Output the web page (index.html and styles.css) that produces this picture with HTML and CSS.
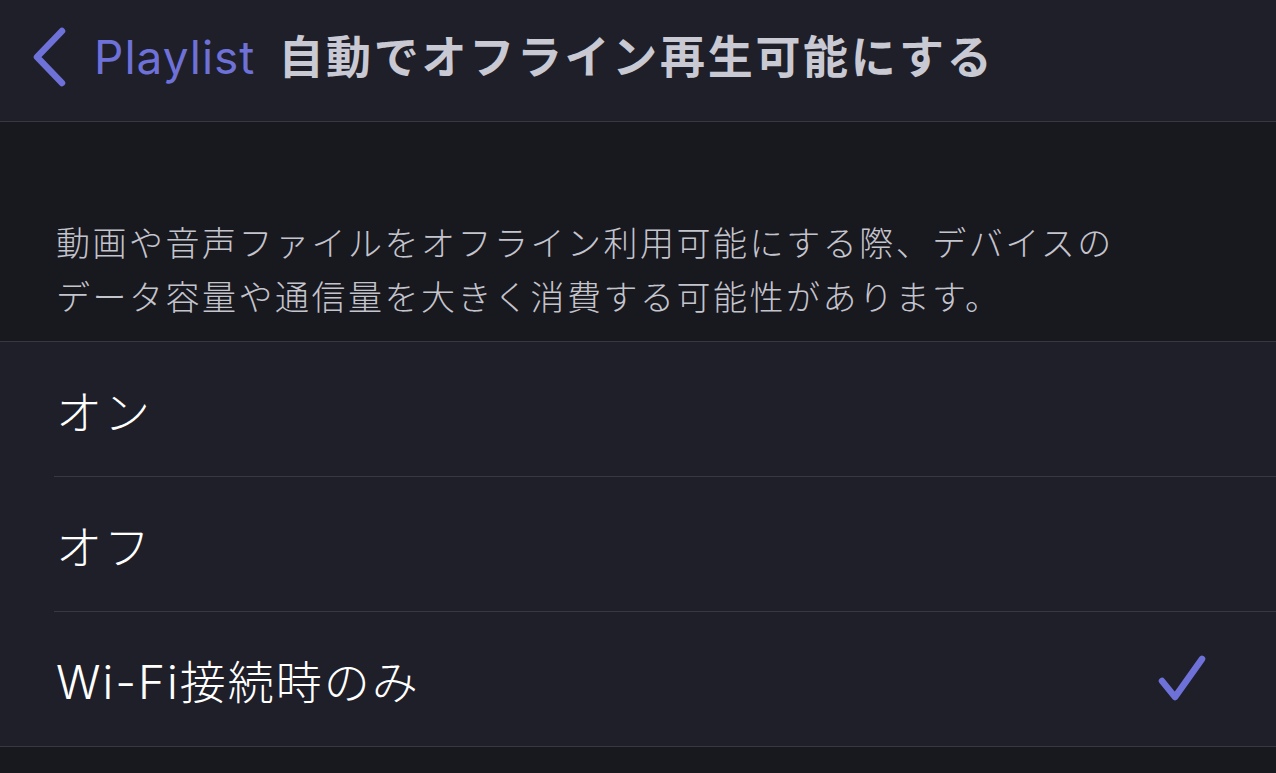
FILE: index.html
```html
<!DOCTYPE html>
<html lang="ja">
<head>
<meta charset="utf-8">
<title>自動でオフライン再生可能にする</title>
<link rel="stylesheet" href="styles.css">
</head>
<body>
<div class="screen">
  <header class="navbar">
    <div class="back">
      <svg class="chevron" width="40" height="62" viewBox="0 0 40 62">
        <path d="M31 5 L6 31 L31 57" fill="none" stroke="#6e71d8" stroke-width="6.5" stroke-linecap="round" stroke-linejoin="round"/>
      </svg>
      <span class="back-label">Playlist</span>
    </div>
    <h1 class="title">自動でオフライン再生可能にする</h1>
  </header>
  <section class="group">
    <p class="group-header">動画や音声ファイルをオフライン利用可能にする際、デバイスの<br>データ容量や通信量を大きく消費する可能性があります。</p>
    <ul class="list">
      <li class="row"><span class="row-label">オン</span></li>
      <li class="row"><span class="row-label">オフ</span></li>
      <li class="row"><span class="row-label">Wi-Fi接続時のみ</span>
        <svg class="check" width="54" height="54" viewBox="0 0 54 54">
          <path d="M6 27 L19 43 L46 5" fill="none" stroke="#6e71d8" stroke-width="6.5" stroke-linecap="round" stroke-linejoin="round"/>
        </svg>
      </li>
    </ul>
  </section>
</div>
</body>
</html>
```
FILE: styles.css
```css
html, body {
  margin: 0;
  padding: 0;
  background: #18181f;
}
body {
  font-family: Inter, "Noto Sans CJK JP", sans-serif;
  width: 1276px;
  height: 773px;
  overflow: hidden;
}
.screen {
  display: flex;
  flex-direction: column;
}
.navbar {
  height: 121px;
  background: #1f1f29;
  border-bottom: 1px solid #383843;
  display: flex;
  align-items: center;
  padding-left: 31px;
}
.back {
  display: flex;
  align-items: center;
  margin-top: -8px;
}
.chevron {
  display: block;
  margin-right: 23px;
}
.back-label {
  color: #6e71d8;
  font-size: 46px;
  font-weight: 400;
  letter-spacing: 1px;
}
.title {
  margin: -12px 0 0 23px;
  color: #c9c9d3;
  font-size: 45px;
  font-weight: 700;
  letter-spacing: 2.7px;
}
.group {
  display: flex;
  flex-direction: column;
}
.group-header {
  margin: 0;
  padding: 95px 0 16px 56px;
  color: #c4c4cd;
  font-size: 34px;
  font-weight: 300;
  line-height: 54px;
  letter-spacing: 2.5px;
}
.list {
  list-style: none;
  margin: 0;
  padding: 0 0 0 54px;
  background: #1f1f29;
  border-top: 1px solid #383843;
  border-bottom: 1px solid #383843;
}
.row {
  height: 134px;
  display: flex;
  align-items: center;
  justify-content: space-between;
  padding-right: 66px;
  border-bottom: 1px solid #383843;
}
.row:last-child {
  border-bottom: none;
}
.row-label {
  color: #ffffff;
  font-size: 46px;
  font-weight: 300;
  padding-left: 2px;
  letter-spacing: 2px;
}
.check {
  display: block;
  margin-top: 3px;
}
```
